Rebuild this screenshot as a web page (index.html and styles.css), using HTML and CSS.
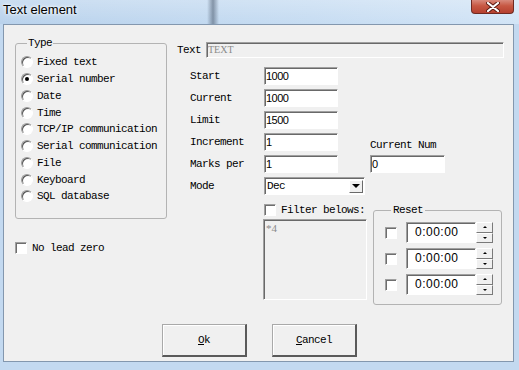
FILE: index.html
```html
<!DOCTYPE html>
<html lang="en">
<head>
  <meta charset="UTF-8">
  <title>Text element</title>
  <meta name="viewport" content="width=device-width, initial-scale=1.0">
  <link rel="stylesheet" href="styles.css">
</head>
<body>
  <div class="window">
    <div class="titlebar">
      <span class="title">Text element</span>
      <div class="close">
        <svg width="14" height="10" viewBox="0 0 14 10">
          <path d="M2 1 L12 9 M12 1 L2 9" stroke="#5a1a12" stroke-width="4" stroke-linecap="round"/>
          <path d="M2 1 L12 9 M12 1 L2 9" stroke="#fff" stroke-width="2.2" stroke-linecap="round"/>
        </svg>
      </div>
    </div>

    <div class="client">
      <div class="main">
        <div class="left">
          <fieldset class="group type">
            <legend>Type</legend>
            <div class="radio"><span class="dot"></span>Fixed text</div>
            <div class="radio"><span class="dot on"></span>Serial number</div>
            <div class="radio"><span class="dot"></span>Date</div>
            <div class="radio"><span class="dot"></span>Time</div>
            <div class="radio"><span class="dot"></span>TCP/IP communication</div>
            <div class="radio"><span class="dot"></span>Serial communication</div>
            <div class="radio"><span class="dot"></span>File</div>
            <div class="radio"><span class="dot"></span>Keyboard</div>
            <div class="radio"><span class="dot"></span>SQL database</div>
          </fieldset>
          <div class="check nolead"><span class="box"></span>No lead zero</div>
        </div>

        <div class="right">
          <div class="textrow">
            <span>Text</span>
            <div class="field wide disabled">TEXT</div>
          </div>

          <div class="form">
            <span class="lbl">Start</span><div class="field num">1000</div>
            <span class="lbl">Current</span><div class="field num">1000</div>
            <span class="lbl">Limit</span><div class="field num">1500</div>
            <span class="lbl">Increment</span><div class="field num">1</div>
            <span class="lbl">Marks per</span><div class="field num">1</div>
            <span class="lbl">Mode</span>
            <div class="select">
              <span>Dec</span>
              <div class="drop"><i class="arrow-down"></i></div>
            </div>
            <span class="curlabel">Current Num</span>
            <div class="field num cur">0</div>
          </div>

          <div class="lower">
            <div class="filter">
              <div class="check"><span class="box"></span>Filter belows:</div>
              <div class="textarea">*4</div>
            </div>
            <fieldset class="group reset">
              <legend>Reset</legend>
              <div class="resetrow">
                <span class="box"></span>
                <div class="time">0:00:00</div>
                <div class="spin"><div><i class="up"></i></div><div><i class="down"></i></div></div>
              </div>
              <div class="resetrow">
                <span class="box"></span>
                <div class="time">0:00:00</div>
                <div class="spin"><div><i class="up"></i></div><div><i class="down"></i></div></div>
              </div>
              <div class="resetrow">
                <span class="box"></span>
                <div class="time">0:00:00</div>
                <div class="spin"><div><i class="up"></i></div><div><i class="down"></i></div></div>
              </div>
            </fieldset>
          </div>
        </div>
      </div>

      <div class="buttons">
        <div class="btn"><u>O</u>k</div>
        <div class="btn"><u>C</u>ancel</div>
      </div>
    </div>
  </div>
</body>
</html>
```

FILE: styles.css
```css
body {
  margin: 0;
}
.window {
  width: 519px;
  height: 370px;
  display: flex;
  flex-direction: column;
  background: #c3d9f0;
  font-family: 'Liberation Mono', monospace;
  font-size: 11px;
  letter-spacing: -0.6px;
  color: #000;
}

/* title bar */
.titlebar {
  height: 24px;
  display: flex;
  justify-content: space-between;
  align-items: flex-start;
  background:
    linear-gradient(to right, transparent 207px, rgba(70,85,105,0.55) 213px, transparent 219px),
    linear-gradient(to bottom, rgba(255,255,255,0.25), rgba(255,255,255,0)),
    linear-gradient(to right, #b9d2ec, #c6dcf2 60%, #d2e4f6);
}
.title {
  margin-left: 3px;
  font-family: 'Liberation Sans', sans-serif;
  font-size: 13px;
  letter-spacing: 0;
  line-height: 20px;
  text-shadow: 0 0 5px #fff, 0 0 3px #fff;
}
.close {
  width: 43px;
  height: 14px;
  margin-right: 5px;
  box-sizing: border-box;
  border: 1px solid #6e2a22;
  border-top: none;
  border-radius: 0 0 4px 4px;
  background: linear-gradient(to bottom, #d88a7c, #c75843 45%, #b5402f);
  display: flex;
  align-items: center;
  justify-content: center;
}

/* client area */
.client {
  height: 338px;
  margin: 0 5px 0 3px;
  box-sizing: border-box;
  border: 1px solid #8397ae;
  background: #f0f0f0;
  display: flex;
  flex-direction: column;
}
.main {
  display: flex;
}
.left {
  width: 152px;
  margin-left: 11px;
}
.group {
  margin: 0;
  border: 1px solid #b3b3b3;
  border-radius: 3px;
}
.group legend {
  line-height: 13px;
  margin-left: 6px;
  padding: 0 1px;
}
.type {
  margin-top: 12px;
  padding: 4px 0 13px 5px;
}
.radio {
  height: 16.75px;
  display: flex;
  align-items: center;
  gap: 4px;
  white-space: nowrap;
}
.dot {
  width: 12px;
  height: 12px;
  box-sizing: border-box;
  border-radius: 50%;
  border: 1px solid;
  border-color: #9a9a9a #fff #fff #9a9a9a;
  box-shadow: inset 1px 1px #555;
  background: #fff;
  display: flex;
  align-items: center;
  justify-content: center;
}
.dot.on::after {
  content: "";
  width: 4px;
  height: 4px;
  border-radius: 50%;
  background: #000;
}
.box {
  width: 12px;
  height: 12px;
  flex: none;
  box-sizing: border-box;
  border: 1px solid;
  border-color: #a0a0a0 #fff #fff #a0a0a0;
  box-shadow: inset 1px 1px #6e6e6e;
  background: #fff;
}
.check {
  display: flex;
  align-items: center;
  gap: 5px;
  height: 12px;
  white-space: nowrap;
}
.nolead {
  margin-top: 23px;
}

/* right column */
.right {
  width: 327px;
  margin-left: 10px;
}
.textrow {
  margin-top: 17px;
  height: 16px;
  display: flex;
  align-items: center;
  gap: 5px;
}
.field {
  box-sizing: border-box;
  border: 1px solid;
  border-color: #a0a0a0 #fff #fff #a0a0a0;
  box-shadow: inset 1px 1px #696969;
  background: #fff;
  padding-left: 1px;
  white-space: nowrap;
}
.wide {
  width: 298px;
  height: 16px;
  line-height: 14px;
}
.disabled {
  background: #f0f0f0;
  color: #8a8a8a;
  font-family: 'Liberation Serif', serif;
  font-size: 10px;
  letter-spacing: 0;
}
.form {
  margin: 9px 0 0 13px;
  display: grid;
  grid-template-columns: 74px 74px 32px 75px;
  grid-auto-rows: 18px;
  row-gap: 4px;
  align-items: center;
}
.lbl {
  grid-column: 1;
  white-space: nowrap;
}
.num {
  grid-column: 2;
  height: 18px;
  line-height: 17px;
  font-family: 'Liberation Sans', sans-serif;
  font-size: 11px;
  letter-spacing: -0.5px;
}
.curlabel {
  grid-column: 4;
  grid-row: 4;
  align-self: end;
  white-space: nowrap;
}
.num.cur {
  grid-column: 4;
  grid-row: 5;
}
.select {
  grid-column: 2 / 5;
  width: 101px;
  height: 18px;
  box-sizing: border-box;
  border: 1px solid;
  border-color: #a0a0a0 #fff #fff #a0a0a0;
  box-shadow: inset 1px 1px #696969;
  background: #fff;
  display: flex;
  align-items: center;
  justify-content: space-between;
  padding: 0 1px 0 2px;
}
.drop {
  width: 14px;
  height: 13px;
  box-sizing: border-box;
  border: 1px solid;
  border-color: #fff #6a6a6a #6a6a6a #fff;
  background: #f0f0f0;
  display: flex;
  align-items: center;
  justify-content: center;
}
.arrow-down {
  border-left: 4px solid transparent;
  border-right: 4px solid transparent;
  border-top: 4px solid #000;
}

/* filter + reset */
.lower {
  margin: 9px 0 0 86px;
  display: flex;
}
.filter {
  width: 104px;
}
.filter .check {
  margin-left: 1px;
}
.textarea {
  margin-top: 3px;
  height: 81px;
  box-sizing: border-box;
  border: 1px solid;
  border-color: #a0a0a0 #fff #fff #a0a0a0;
  box-shadow: inset 1px 1px #696969;
  background: #f0f0f0;
  color: #8a8a8a;
  font-family: 'Liberation Serif', serif;
  font-size: 11px;
  letter-spacing: 0;
  padding: 2px 0 0 2px;
}
.reset {
  width: 129px;
  box-sizing: border-box;
  margin-left: 6px;
  padding: 5px 0 4px 11px;
}
.reset legend {
  padding: 0 2px;
}
.resetrow {
  display: flex;
  align-items: center;
  height: 21px;
  margin-bottom: 5px;
}
.resetrow .box {
  margin-right: 9px;
}
.time {
  width: 70px;
  height: 21px;
  box-sizing: border-box;
  border: 1px solid;
  border-color: #a0a0a0 #fff #fff #a0a0a0;
  box-shadow: inset 1px 1px #696969;
  background: #fff;
  font-family: 'Liberation Sans', sans-serif;
  font-size: 12px;
  letter-spacing: 0.5px;
  line-height: 19px;
  padding-left: 8px;
}
.spin {
  width: 17px;
  height: 21px;
  display: flex;
  flex-direction: column;
}
.spin div {
  flex: 1;
  box-sizing: border-box;
  border: 1px solid;
  border-color: #fff #7a7a7a #7a7a7a #fff;
  background: #f0f0f0;
  display: flex;
  align-items: center;
  justify-content: center;
}
.up {
  border-left: 2px solid transparent;
  border-right: 2px solid transparent;
  border-bottom: 2px solid #000;
}
.down {
  border-left: 2px solid transparent;
  border-right: 2px solid transparent;
  border-top: 2px solid #000;
}

/* buttons */
.buttons {
  margin-top: auto;
  margin-bottom: 4px;
  padding-left: 2px;
  display: flex;
  justify-content: center;
  gap: 25px;
}
.btn {
  width: 85px;
  height: 33px;
  box-sizing: border-box;
  border-style: solid;
  border-width: 1px 2px 2px 1px;
  border-color: #a9a9a9 #5a5a5a #5a5a5a #a9a9a9;
  box-shadow: inset 1px 1px #fff;
  background: #f0f0f0;
  display: flex;
  align-items: center;
  justify-content: center;
}
```
